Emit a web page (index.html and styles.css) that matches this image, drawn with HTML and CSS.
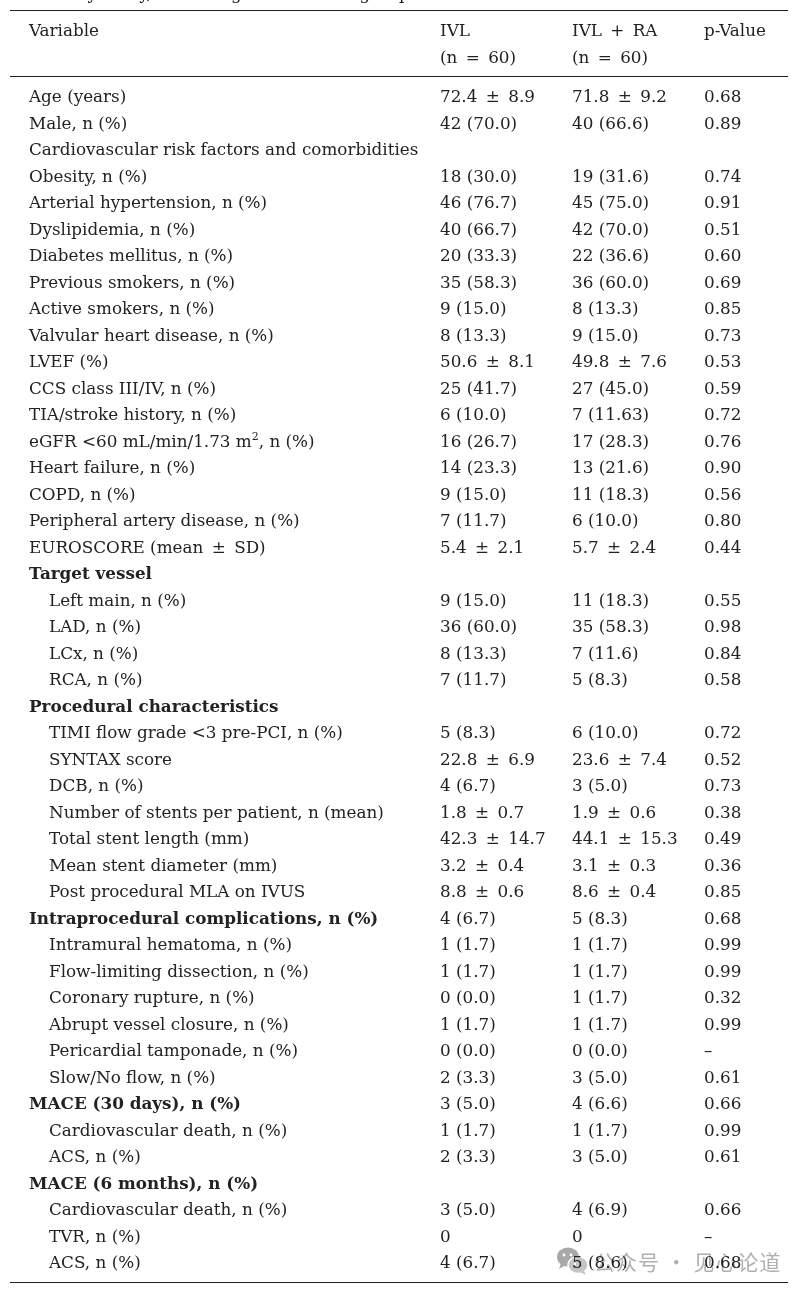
FILE: index.html
```html
<!DOCTYPE html>
<html lang="en">
<head>
    <meta charset="UTF-8">
    <meta name="viewport" content="width=device-width, initial-scale=1.0">
    <title>Baseline characteristics</title>
    <link rel="stylesheet" href="styles.css">
</head>
<body>
    <div class="page">
        <div class="caption"><span>Entirely study, according to treatment group.</span></div>

        <table class="data">
            <colgroup>
                <col class="col-var">
                <col class="col-num">
                <col class="col-num">
                <col class="col-p">
            </colgroup>
            <thead>
                <tr>
                    <th>Variable</th>
                    <th>IVL<br>(n&ensp;=&ensp;60)</th>
                    <th>IVL&ensp;+&ensp;RA<br>(n&ensp;=&ensp;60)</th>
                    <th>p-Value</th>
                </tr>
            </thead>
            <tbody>
                <tr><td>Age (years)</td><td>72.4&ensp;±&ensp;8.9</td><td>71.8&ensp;±&ensp;9.2</td><td>0.68</td></tr>
                <tr><td>Male, n (%)</td><td>42 (70.0)</td><td>40 (66.6)</td><td>0.89</td></tr>
                <tr><td colspan="4">Cardiovascular risk factors and comorbidities</td></tr>
                <tr><td>Obesity, n (%)</td><td>18 (30.0)</td><td>19 (31.6)</td><td>0.74</td></tr>
                <tr><td>Arterial hypertension, n (%)</td><td>46 (76.7)</td><td>45 (75.0)</td><td>0.91</td></tr>
                <tr><td>Dyslipidemia, n (%)</td><td>40 (66.7)</td><td>42 (70.0)</td><td>0.51</td></tr>
                <tr><td>Diabetes mellitus, n (%)</td><td>20 (33.3)</td><td>22 (36.6)</td><td>0.60</td></tr>
                <tr><td>Previous smokers, n (%)</td><td>35 (58.3)</td><td>36 (60.0)</td><td>0.69</td></tr>
                <tr><td>Active smokers, n (%)</td><td>9 (15.0)</td><td>8 (13.3)</td><td>0.85</td></tr>
                <tr><td>Valvular heart disease, n (%)</td><td>8 (13.3)</td><td>9 (15.0)</td><td>0.73</td></tr>
                <tr><td>LVEF (%)</td><td>50.6&ensp;±&ensp;8.1</td><td>49.8&ensp;±&ensp;7.6</td><td>0.53</td></tr>
                <tr><td>CCS class III/IV, n (%)</td><td>25 (41.7)</td><td>27 (45.0)</td><td>0.59</td></tr>
                <tr><td>TIA/stroke history, n (%)</td><td>6 (10.0)</td><td>7 (11.63)</td><td>0.72</td></tr>
                <tr><td>eGFR &lt;60 mL/min/1.73 m<sup>2</sup>, n (%)</td><td>16 (26.7)</td><td>17 (28.3)</td><td>0.76</td></tr>
                <tr><td>Heart failure, n (%)</td><td>14 (23.3)</td><td>13 (21.6)</td><td>0.90</td></tr>
                <tr><td>COPD, n (%)</td><td>9 (15.0)</td><td>11 (18.3)</td><td>0.56</td></tr>
                <tr><td>Peripheral artery disease, n (%)</td><td>7 (11.7)</td><td>6 (10.0)</td><td>0.80</td></tr>
                <tr><td>EUROSCORE (mean&ensp;±&ensp;SD)</td><td>5.4&ensp;±&ensp;2.1</td><td>5.7&ensp;±&ensp;2.4</td><td>0.44</td></tr>
                <tr class="section"><td colspan="4">Target vessel</td></tr>
                <tr><td class="sub">Left main, n (%)</td><td>9 (15.0)</td><td>11 (18.3)</td><td>0.55</td></tr>
                <tr><td class="sub">LAD, n (%)</td><td>36 (60.0)</td><td>35 (58.3)</td><td>0.98</td></tr>
                <tr><td class="sub">LCx, n (%)</td><td>8 (13.3)</td><td>7 (11.6)</td><td>0.84</td></tr>
                <tr><td class="sub">RCA, n (%)</td><td>7 (11.7)</td><td>5 (8.3)</td><td>0.58</td></tr>
                <tr class="section"><td colspan="4">Procedural characteristics</td></tr>
                <tr><td class="sub">TIMI flow grade &lt;3 pre-PCI, n (%)</td><td>5 (8.3)</td><td>6 (10.0)</td><td>0.72</td></tr>
                <tr><td class="sub">SYNTAX score</td><td>22.8&ensp;±&ensp;6.9</td><td>23.6&ensp;±&ensp;7.4</td><td>0.52</td></tr>
                <tr><td class="sub">DCB, n (%)</td><td>4 (6.7)</td><td>3 (5.0)</td><td>0.73</td></tr>
                <tr><td class="sub">Number of stents per patient, n (mean)</td><td>1.8&ensp;±&ensp;0.7</td><td>1.9&ensp;±&ensp;0.6</td><td>0.38</td></tr>
                <tr><td class="sub">Total stent length (mm)</td><td>42.3&ensp;±&ensp;14.7</td><td>44.1&ensp;±&ensp;15.3</td><td>0.49</td></tr>
                <tr><td class="sub">Mean stent diameter (mm)</td><td>3.2&ensp;±&ensp;0.4</td><td>3.1&ensp;±&ensp;0.3</td><td>0.36</td></tr>
                <tr><td class="sub">Post procedural MLA on IVUS</td><td>8.8&ensp;±&ensp;0.6</td><td>8.6&ensp;±&ensp;0.4</td><td>0.85</td></tr>
                <tr class="section"><td>Intraprocedural complications, n (%)</td><td>4 (6.7)</td><td>5 (8.3)</td><td>0.68</td></tr>
                <tr><td class="sub">Intramural hematoma, n (%)</td><td>1 (1.7)</td><td>1 (1.7)</td><td>0.99</td></tr>
                <tr><td class="sub">Flow-limiting dissection, n (%)</td><td>1 (1.7)</td><td>1 (1.7)</td><td>0.99</td></tr>
                <tr><td class="sub">Coronary rupture, n (%)</td><td>0 (0.0)</td><td>1 (1.7)</td><td>0.32</td></tr>
                <tr><td class="sub">Abrupt vessel closure, n (%)</td><td>1 (1.7)</td><td>1 (1.7)</td><td>0.99</td></tr>
                <tr><td class="sub">Pericardial tamponade, n (%)</td><td>0 (0.0)</td><td>0 (0.0)</td><td>–</td></tr>
                <tr><td class="sub">Slow/No flow, n (%)</td><td>2 (3.3)</td><td>3 (5.0)</td><td>0.61</td></tr>
                <tr class="section"><td>MACE (30 days), n (%)</td><td>3 (5.0)</td><td>4 (6.6)</td><td>0.66</td></tr>
                <tr><td class="sub">Cardiovascular death, n (%)</td><td>1 (1.7)</td><td>1 (1.7)</td><td>0.99</td></tr>
                <tr><td class="sub">ACS, n (%)</td><td>2 (3.3)</td><td>3 (5.0)</td><td>0.61</td></tr>
                <tr class="section"><td colspan="4">MACE (6 months), n (%)</td></tr>
                <tr><td class="sub">Cardiovascular death, n (%)</td><td>3 (5.0)</td><td>4 (6.9)</td><td>0.66</td></tr>
                <tr><td class="sub">TVR, n (%)</td><td>0</td><td>0</td><td>–</td></tr>
                <tr><td class="sub">ACS, n (%)</td><td>4 (6.7)</td><td>5 (8.6)</td><td>0.68</td></tr>
            </tbody>
        </table>

        <!-- filigrane -->
        <div class="watermark">
            <svg class="wm-icon" width="34" height="30" viewBox="0 0 34 30">
                <ellipse cx="12" cy="11" rx="11" ry="9.5" fill="#a8a8a8"/>
                <path d="M5 17 L3 23 L10 19 Z" fill="#a8a8a8"/>
                <ellipse cx="22" cy="19" rx="10" ry="8.5" fill="#c4c4c4" stroke="#fff" stroke-width="1.5"/>
                <path d="M28 25 L30 29 L24 26 Z" fill="#c4c4c4"/>
                <circle cx="8" cy="9" r="1.4" fill="#fff"/>
                <circle cx="15" cy="9" r="1.4" fill="#fff"/>
                <circle cx="19" cy="18" r="1.2" fill="#fff"/>
                <circle cx="25" cy="18" r="1.2" fill="#fff"/>
            </svg>
            <span class="wm-text">公众号 · 见心论道</span>
        </div>
    </div>
</body>
</html>
```

FILE: styles.css
```css
/* Tableau de données */
body {
    margin: 0;
    background: #fff;
    color: #222;
    font-family: "DejaVu Serif", "Liberation Serif", serif;
    font-size: 16.8px;
}

.page {
    position: relative;
    width: 802px;
    height: 1294px;
    overflow: hidden;
}

.caption {
    height: 10px;
    overflow: hidden;
    padding-left: 29px;
}
.caption span {
    display: block;
    line-height: 20px;
    margin-top: -17px;
}

.data {
    margin-left: 10px;
    width: 778px;
    border-collapse: collapse;
    table-layout: fixed;
    line-height: 26.5px;
}
.col-var { width: 430px; }
.col-num { width: 132px; }
.col-p { width: 84px; }

.data th,
.data td {
    padding: 0;
    text-align: left;
    vertical-align: top;
    font-weight: normal;
    white-space: nowrap;
}
.data th:first-child,
.data td:first-child { padding-left: 19px; }
.data td.sub { padding-left: 39px; }

.data thead tr {
    border-top: 1px solid #222;
    border-bottom: 1px solid #222;
}
.data thead th { padding-top: 6px; padding-bottom: 6px; }

.data tbody { border-bottom: 1px solid #222; }
.data tbody tr:first-child td { padding-top: 6px; }
.data tbody tr:last-child td { padding-bottom: 6px; }

.data .section td:first-child { font-weight: bold; }

.data sup {
    font-size: 11px;
    line-height: 0;
}

.watermark {
    position: absolute;
    left: 556px;
    top: 1246px;
    display: flex;
    align-items: center;
    gap: 4px;
    mix-blend-mode: multiply;
}
.wm-text {
    font-family: "Noto Sans CJK SC", sans-serif;
    font-size: 21px;
    color: #b0b0b0;
    letter-spacing: 1px;
}
```
